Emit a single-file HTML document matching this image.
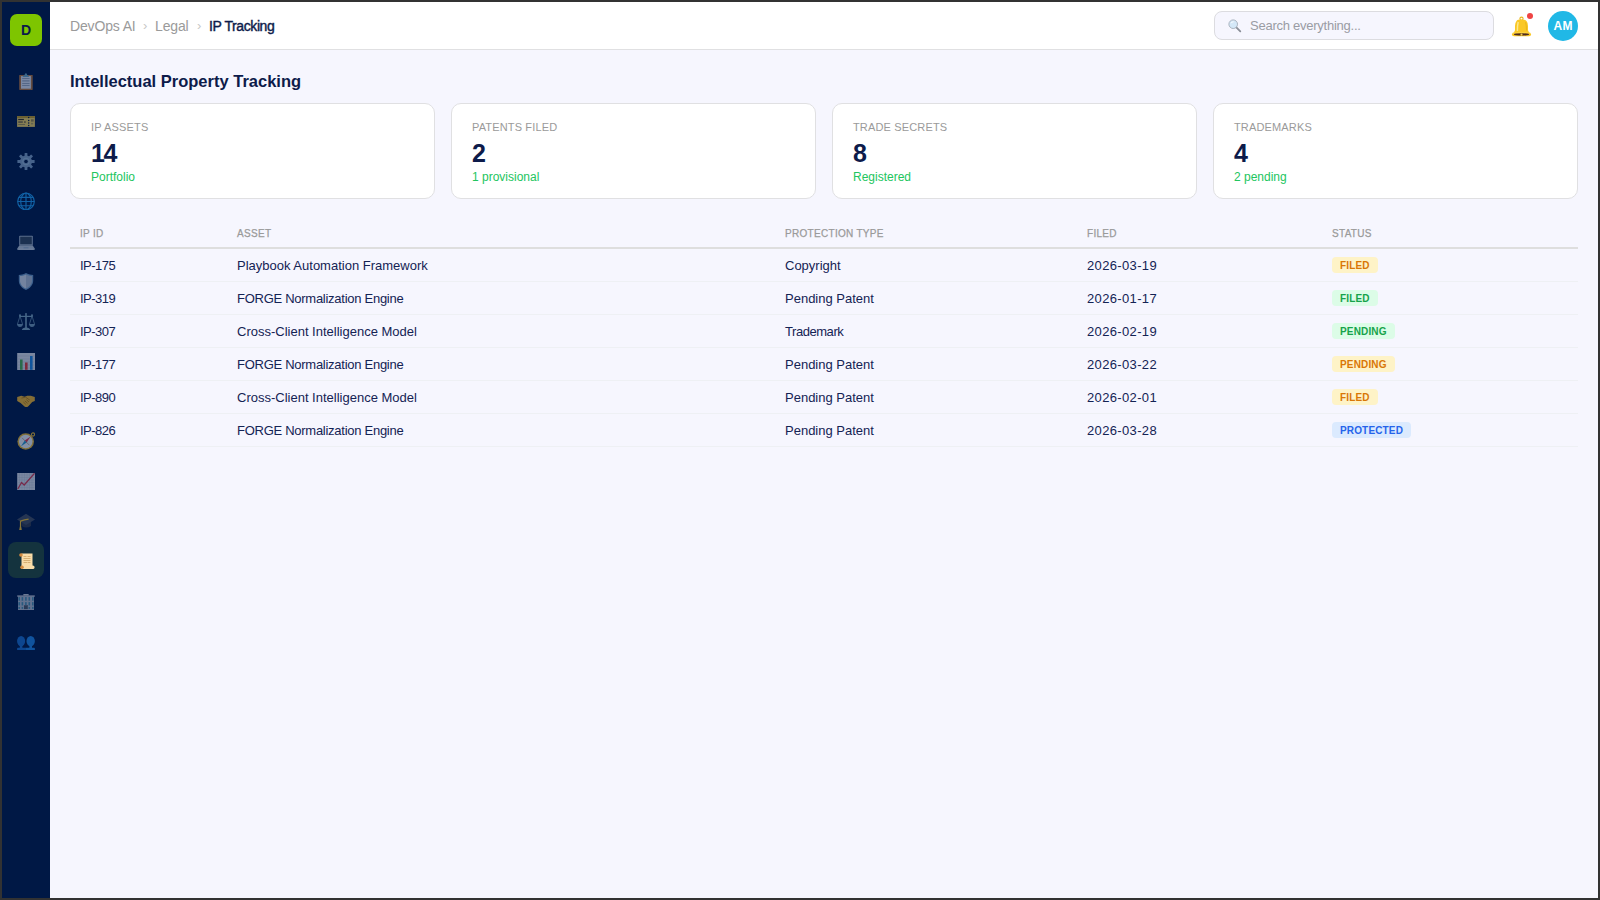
<!DOCTYPE html>
<html><head><meta charset="utf-8">
<style>
*{box-sizing:border-box;margin:0;padding:0}
html,body{width:1600px;height:900px;overflow:hidden;background:#323232;font-family:"Liberation Sans",sans-serif}
#frame{position:absolute;left:2px;top:2px;width:1596px;height:896px;background:#f6f6fe;overflow:hidden}
#side{position:absolute;left:0;top:0;width:48px;height:896px;background:#001845}
#logo{position:absolute;left:8px;top:12px;width:32px;height:32px;border-radius:7px;background:#7ec500;color:#0a1a4a;font-weight:bold;font-size:14px;text-align:center;line-height:32px}
.ni{position:absolute;left:6px;width:36px;height:36px;border-radius:8px}
.ni svg{position:absolute;left:9px;top:9px;width:18px;height:18px}
.ni.act{background:#14333e}
#hdr{position:absolute;left:48px;top:0;width:1548px;height:48px;background:#fff;border-bottom:1px solid #e0e0e2}
.bc{position:absolute;top:16px;font-size:14px;color:#9a9a9a;white-space:nowrap;letter-spacing:-0.15px}
.bc.cur{color:#0d1b4a;font-size:14px;letter-spacing:-0.4px;top:16px;-webkit-text-stroke:0.4px #0d1b4a}
.bsep{position:absolute;top:16px;font-size:13px;color:#c8c8c8}
#search{position:absolute;left:1164px;top:9px;width:280px;height:29px;border:1px solid #dcdce0;border-radius:8px;background:#f6f6fe}
#search span{position:absolute;left:35px;top:6px;font-size:13px;color:#9a9ca4;letter-spacing:-0.25px}
#avatar{position:absolute;left:1498px;top:9px;width:30px;height:30px;border-radius:50%;background:#20b8e6;color:#fff;font-size:12px;font-weight:bold;text-align:center;line-height:30px;letter-spacing:0.5px;text-indent:0.5px}
h1{position:absolute;left:68px;top:69.5px;font-size:16.5px;font-weight:bold;color:#0d1b4a;white-space:nowrap}
.card{position:absolute;top:101px;width:365px;height:96px;background:#fff;border:1px solid #e0e0e2;border-radius:10px}
.card .lb{position:absolute;left:20px;top:17px;font-size:11px;color:#9a9a9a;letter-spacing:0.15px;white-space:nowrap}
.card .v{position:absolute;left:20px;top:34.5px;font-size:25px;letter-spacing:-1.5px;font-weight:bold;color:#0d1b4a}
.card .s{position:absolute;left:20px;top:65.5px;font-size:12px;color:#22c55e;letter-spacing:0px;white-space:nowrap}
#tbl{position:absolute;left:68px;top:219px;width:1508px}
.th{position:absolute;top:0;width:1508px;height:28px;border-bottom:2px solid #dedede}
.th span{position:absolute;top:7px;font-size:10px;color:#9a9a9a;letter-spacing:0.3px;-webkit-text-stroke:0.25px #9a9a9a;white-space:nowrap}
.tr{position:absolute;left:0;width:1508px;height:33px;border-bottom:1px solid #eef0f4}
.tr span{position:absolute;top:9px;font-size:13px;color:#142354;white-space:nowrap}
.tr span.b{top:8px;height:16px;line-height:17px;padding:0 8px;border-radius:4px;font-size:10px;font-weight:bold;letter-spacing:0.15px}
.tr span.id{letter-spacing:-0.5px}
.tr span.dt{letter-spacing:0.35px}
.tr span.fg{letter-spacing:-0.27px}
.y{background:#fef3c7;color:#d97706!important}
.g{background:#dcfce7;color:#16a34a!important}
.bl{background:#dbeafe;color:#2563eb!important}
</style></head><body><div id="frame">
<div id="side">
<div id="logo">D</div>
<div class="ni act" style="top:540px"></div>
<svg style="position:absolute;left:15px;top:70px;opacity:0.55" width="18" height="18" viewBox="0 -0.5 18 18"><rect x="2.2" y="2.4" width="13.5" height="15" rx="0.6" fill="#b7743a"/><rect x="4" y="3.6" width="9.9" height="12.6" fill="#dde5f2"/><path d="M5.2 6h7.4M5.2 8.4h7.4M5.2 11h7.4M5.2 13h7.4" stroke="#9aa8be" stroke-width="1.1"/><path d="M5.5 4.4 Q6 3 7.6 2.6 L8 1.2 Q8.9 0.1 9.8 1.2 L10.2 2.6 Q11.8 3 12.2 4.4Z" fill="#6aa6c4"/></svg>
<svg style="position:absolute;left:15px;top:110px;opacity:0.55" width="18" height="18" viewBox="0 -0.5 18 18"><rect x="0.1" y="3.6" width="17.8" height="10.8" fill="#f0d060"/><rect x="0.1" y="3.6" width="17.8" height="1.9" fill="#c49a20"/><rect x="1.2" y="6.4" width="5.7" height="1.2" fill="#3a3020"/><rect x="1.2" y="8.8" width="4.6" height="1.5" fill="#7a6a40"/><rect x="7" y="8.8" width="1.8" height="1.5" fill="#7a6a40"/><rect x="1.2" y="11.5" width="6.8" height="0.9" fill="#9a8a50"/><rect x="14" y="6.8" width="2.7" height="2.3" fill="#9a8548"/><rect x="14" y="10.4" width="2.2" height="1.5" fill="#b0a060"/><g fill="#001845"><circle cx="11.7" cy="5" r="0.75"/><circle cx="11.7" cy="8" r="0.75"/><circle cx="11.7" cy="10.4" r="0.75"/><circle cx="11.7" cy="13" r="0.75"/></g></svg>
<svg style="position:absolute;left:15px;top:150px;opacity:0.55" width="18" height="18" viewBox="0 -0.5 18 18"><rect x="7.6" y="0.4" width="2.8" height="5" rx="0.5" fill="#80a0c4" transform="rotate(0 9 9)"/><rect x="7.6" y="0.4" width="2.8" height="5" rx="0.5" fill="#80a0c4" transform="rotate(45 9 9)"/><rect x="7.6" y="0.4" width="2.8" height="5" rx="0.5" fill="#80a0c4" transform="rotate(90 9 9)"/><rect x="7.6" y="0.4" width="2.8" height="5" rx="0.5" fill="#80a0c4" transform="rotate(135 9 9)"/><rect x="7.6" y="0.4" width="2.8" height="5" rx="0.5" fill="#80a0c4" transform="rotate(180 9 9)"/><rect x="7.6" y="0.4" width="2.8" height="5" rx="0.5" fill="#80a0c4" transform="rotate(225 9 9)"/><rect x="7.6" y="0.4" width="2.8" height="5" rx="0.5" fill="#80a0c4" transform="rotate(270 9 9)"/><rect x="7.6" y="0.4" width="2.8" height="5" rx="0.5" fill="#80a0c4" transform="rotate(315 9 9)"/><circle cx="9" cy="9" r="6" fill="#80a0c4"/><circle cx="9" cy="9" r="3.3" fill="none" stroke="#9cbcd8" stroke-width="1"/><circle cx="9" cy="9" r="1.8" fill="#001845"/></svg>
<svg style="position:absolute;left:15px;top:190px;opacity:0.55" width="18" height="18" viewBox="0 -0.5 18 18"><g fill="none" stroke="#1f9ef5" stroke-width="1.15"><circle cx="9" cy="9" r="8.3"/><ellipse cx="9" cy="9" rx="5.3" ry="8.3"/><path d="M9 0.7v16.6M1.6 4.8h14.8M0.7 9h16.6M1.6 13.2h14.8"/></g></svg>
<svg style="position:absolute;left:15px;top:230px;opacity:0.55" width="18" height="18" viewBox="0 -0.5 18 18"><rect x="2.2" y="3.2" width="13.6" height="9.6" rx="0.8" fill="#a9b9cc"/><rect x="3.2" y="4.2" width="11.6" height="7.6" fill="#34465c"/><path d="M2.4 12.8 H15.6 L18 16.6 Q18 17.4 17 17.4 H1 Q0 17.4 0 16.6Z" fill="#b9c6d6"/><path d="M2 16.6 H16" stroke="#dde6f0" stroke-width="0.6"/><rect x="6.5" y="14.8" width="5" height="1" fill="#8fa8c8"/></svg>
<svg style="position:absolute;left:15px;top:270px;opacity:0.55" width="18" height="18" viewBox="0 -0.5 18 18"><path d="M9 0.5 C6 2 4 2.2 1.8 2.5 V8 C1.8 12.5 5 15.8 9 17.5 C13 15.8 16.2 12.5 16.2 8 V2.5 C14 2.2 12 2 9 0.5Z" fill="#6f9cc8"/><path d="M9 1.9 C6.6 3.1 4.8 3.4 3 3.6 V8 C3 11.8 5.6 14.6 9 16.1Z" fill="#d2dcea"/><path d="M9 1.9 C11.4 3.1 13.2 3.4 15 3.6 V8 C15 11.8 12.4 14.6 9 16.1Z" fill="#aebdd2"/></svg>
<svg style="position:absolute;left:15px;top:310px;opacity:0.55" width="18" height="18" viewBox="0 -0.5 18 18"><g fill="#7fa6c0"><rect x="8.2" y="0.6" width="1.6" height="15"/><path d="M4.8 17.6 Q5.2 15.2 9 15 Q12.8 15.2 13.2 17.6Z"/><rect x="2.4" y="3.3" width="13.2" height="1.2"/><circle cx="3" cy="2.8" r="1"/><circle cx="15" cy="2.8" r="1"/><path d="M0 11.6 H6 Q5.6 14.6 3 14.6 Q0.4 14.6 0 11.6Z M12 11.6 H18 Q17.6 14.6 15 14.6 Q12.4 14.6 12 11.6Z" fill-opacity="0.9"/></g><g stroke="#7fa6c0" stroke-width="0.7" fill="none"><path d="M3 3.5 L0.4 11.8 M3 3.5 L5.6 11.8 M15 3.5 L12.4 11.8 M15 3.5 L17.6 11.8"/></g></svg>
<svg style="position:absolute;left:15px;top:350px;opacity:0.55" width="18" height="18" viewBox="0 -0.5 18 18"><rect x="0.2" y="0.5" width="18" height="17" fill="#dfe3ec"/><path d="M0.5 3.5h17M0.5 6.5h17M0.5 9.5h17M0.5 12.5h17M0.5 15.5h17" stroke="#b8bfcc" stroke-width="0.5"/><rect x="3" y="7" width="2.6" height="10.3" fill="#4caf50"/><rect x="8" y="10" width="2.6" height="7.3" fill="#e53935"/><rect x="13" y="3.5" width="2.6" height="13.8" fill="#1e88e5"/></svg>
<svg style="position:absolute;left:15px;top:390px;opacity:0.55" width="18" height="18" viewBox="0 -0.5 18 18"><path d="M0.2 4.6 L4.2 3.2 L7.8 4.2 L10.2 3.3 L13.8 3.2 L17.8 4.6 L17.8 8.4 L15.2 9.6 L11.6 13.4 Q9.6 15.3 7.8 14.2 L3.6 10.6 L0.2 8.6Z" fill="#f2b52a"/><path d="M4.5 5.6 L8.5 4.6 L12.8 7.6 M6.4 9.6 L8.8 11.8 M7.8 8.4 L10.6 10.8 M9.4 7.2 L12 9.5" stroke="#b97a0c" stroke-width="0.9" fill="none"/></svg>
<svg style="position:absolute;left:15px;top:430px;opacity:0.55" width="18" height="18" viewBox="0 -0.5 18 18"><circle cx="16" cy="2" r="1.6" fill="none" stroke="#e8b730" stroke-width="1.1"/><circle cx="8.7" cy="9" r="8.3" fill="#e8b730"/><circle cx="8.7" cy="9" r="6.8" fill="#eef2f8"/><path d="M5 5.3 L12.4 12.7" stroke="#a89078" stroke-width="0.7"/><path d="M13.6 4.1 L9.6 9.9 L7.8 8.1Z" fill="#e53950"/><path d="M3.8 13.9 L7.8 8.1 L9.6 9.9Z" fill="#2a9ad0"/></svg>
<svg style="position:absolute;left:15px;top:470px;opacity:0.55" width="18" height="18" viewBox="0 -0.5 18 18"><rect x="0.2" y="0.5" width="18" height="17" fill="#dfe3ec"/><path d="M0.5 2.5h17M0.5 5h17M0.5 7.5h17M0.5 10h17M0.5 12.5h17M0.5 15h17M2.5 0.5v17M5 0.5v17M7.5 0.5v17M10 0.5v17M12.5 0.5v17M15 0.5v17" stroke="#b8c4d4" stroke-width="0.4"/><path d="M0.8 16.5 L4.5 10 L7.2 12.5 L17.6 0.8" fill="none" stroke="#d83a50" stroke-width="1.3"/></svg>
<svg style="position:absolute;left:15px;top:510px;opacity:0.55" width="18" height="18" viewBox="0 -0.5 18 18"><path d="M4.7 9 V13.5 Q9.3 16.5 14 13.5 V9Z" fill="#323a4c"/><path d="M9 1.3 L18 7 L9 12.6 L0 7Z" fill="#444d60"/><path d="M11.6 6.6 Q7.5 7.2 3.5 8.6 V13.6" stroke="#f0c030" stroke-width="1.2" fill="none"/><path d="M2.2 17.6 L3 13.2 H4 L4.8 17.6Z" fill="#f0c030"/></svg>
<svg style="position:absolute;left:15px;top:550px;opacity:1" width="18" height="18" viewBox="0 0 18 18"><rect x="4.5" y="1.5" width="11" height="14" fill="#f8dca8"/><circle cx="4" cy="3" r="1.8" fill="#d28b40"/><rect x="4" y="13.5" width="13.5" height="3.6" rx="1.6" fill="#f8dca8"/><circle cx="5" cy="15.3" r="1.8" fill="#d28b40"/><path d="M6.5 4.5h3M10.5 4.5h3M6.5 6.5h7M6.5 8.5h7M6.5 10.5h4M11 10.5h2.5" stroke="#c0904e" stroke-width="0.6"/></svg>
<svg style="position:absolute;left:15px;top:590px;opacity:0.55" width="18" height="18" viewBox="0 -0.5 18 18"><rect x="1" y="3.8" width="16" height="13.8" fill="#b4bccc"/><rect x="0.2" y="2.9" width="17.6" height="1.3" fill="#c4cad6"/><rect x="6.3" y="1.4" width="5.4" height="1.7" rx="0.4" fill="#c4cad6"/><rect x="1.4" y="4.6" width="1.6" height="3.6" fill="#4a8fb0"/><rect x="1.4" y="9.6" width="1.6" height="3.4" fill="#4a8fb0"/><rect x="1.4" y="14.4" width="1.6" height="2.0" fill="#4a8fb0"/><rect x="4.6" y="4.6" width="1.6" height="3.6" fill="#4a8fb0"/><rect x="4.6" y="9.6" width="1.6" height="3.4" fill="#4a8fb0"/><rect x="4.6" y="14.4" width="1.6" height="2.0" fill="#4a8fb0"/><rect x="8.1" y="4.6" width="1.6" height="3.6" fill="#4a8fb0"/><rect x="8.1" y="9.6" width="1.6" height="3.4" fill="#4a8fb0"/><rect x="11.5" y="4.6" width="1.6" height="3.6" fill="#4a8fb0"/><rect x="11.5" y="9.6" width="1.6" height="3.4" fill="#4a8fb0"/><rect x="11.5" y="14.4" width="1.6" height="2.0" fill="#4a8fb0"/><rect x="15.0" y="4.6" width="1.6" height="3.6" fill="#4a8fb0"/><rect x="15.0" y="9.6" width="1.6" height="3.4" fill="#4a8fb0"/><rect x="15.0" y="14.4" width="1.6" height="2.0" fill="#4a8fb0"/><rect x="7" y="12.6" width="3.8" height="4" fill="#4d5666"/><rect x="7" y="12.6" width="3.8" height="0.8" fill="#6a7384"/></svg>
<svg style="position:absolute;left:15px;top:630px;opacity:0.55" width="18" height="18" viewBox="0 -0.5 18 18"><ellipse cx="4.1" cy="8.6" rx="4.05" ry="5.2" fill="#186ccc"/><ellipse cx="13.7" cy="8.6" rx="4.2" ry="5.2" fill="#1e84e6"/><rect x="2.8" y="12.5" width="2.6" height="3" fill="#186ccc"/><rect x="12.4" y="12.5" width="2.6" height="3" fill="#1e84e6"/><path d="M0.1 17.7 V16 Q0.1 15.2 1 15.2 H9 V17.7Z" fill="#186ccc"/><path d="M9 17.7 V15.2 H17 Q17.9 15.2 17.9 16 V17.7Z" fill="#1e84e6"/></svg>
</div>
<div id="hdr">
<span class="bc" style="left:20px">DevOps AI</span>
<span class="bsep" style="left:93px">›</span>
<span class="bc" style="left:105px">Legal</span>
<span class="bsep" style="left:147px">›</span>
<span class="bc cur" style="left:159px">IP Tracking</span>
<div id="search"><svg style="position:absolute;left:13px;top:7px" width="14" height="14" viewBox="0 0 14 14"><path d="M7.6 7.6 L12.3 12.3" stroke="#8a8f98" stroke-width="1.8" stroke-linecap="round"/><circle cx="5.2" cy="5.2" r="4.3" fill="#d4e8f8" stroke="#a9b3bf" stroke-width="1"/><path d="M3 4.2 Q4 2.6 5.6 2.8" stroke="#ffffff" stroke-width="0.9" fill="none"/></svg><span>Search everything...</span></div><svg style="position:absolute;left:1460px;top:14px" width="23" height="23" viewBox="0 0 23 23"><circle cx="11.5" cy="2.7" r="1.6" fill="none" stroke="#e8b416" stroke-width="1.1"/><path d="M6.5 4.9 Q7.2 3.6 11.5 3.6 Q15.8 3.6 16.5 4.9 Q18 6.6 18 10 V14.2 Q18.4 16.4 21 17.8 Q21.6 20.2 19 20.3 H4 Q1.4 20.2 2 17.8 Q4.6 16.4 5 14.2 V10 Q5 6.6 6.5 4.9Z" fill="#fac826"/><path d="M8.2 6 Q7.4 9 7.4 15" stroke="#fde98e" stroke-width="1.4" fill="none"/><path d="M15.6 6.2 Q16.4 9 16.5 14.5" stroke="#eab516" stroke-width="1" fill="none"/><path d="M2.6 17.2 Q11.5 15.6 20.4 17.2" stroke="#ffd84a" stroke-width="0.8" fill="none"/><ellipse cx="11.5" cy="18.4" rx="7.6" ry="1.15" fill="#4e2c22"/><circle cx="11.5" cy="18.6" r="1.05" fill="#f5d050"/></svg><div style="position:absolute;left:1477px;top:11px;width:6px;height:6px;border-radius:50%;background:#ef4444"></div>
<div id="avatar">AM</div>
</div>
<h1>Intellectual Property Tracking</h1>
<div class="card" style="left:68px"><div class="lb">IP ASSETS</div><div class="v">14</div><div class="s">Portfolio</div></div>
<div class="card" style="left:449px"><div class="lb">PATENTS FILED</div><div class="v">2</div><div class="s">1 provisional</div></div>
<div class="card" style="left:830px"><div class="lb">TRADE SECRETS</div><div class="v">8</div><div class="s">Registered</div></div>
<div class="card" style="left:1211px"><div class="lb">TRADEMARKS</div><div class="v">4</div><div class="s">2 pending</div></div>
<div id="tbl">
<div class="th"><span style="left:10px">IP ID</span><span style="left:167px">ASSET</span><span style="left:715px">PROTECTION TYPE</span><span style="left:1017px">FILED</span><span style="left:1262px">STATUS</span></div>
<div class="tr" style="top:28px"><span class="id" style="left:10px">IP-175</span><span style="left:167px">Playbook Automation Framework</span><span style="left:715px">Copyright</span><span class="dt" style="left:1017px">2026-03-19</span><span class="b y" style="left:1262px">FILED</span></div>
<div class="tr" style="top:61px"><span class="id" style="left:10px">IP-319</span><span class="fg" style="left:167px">FORGE Normalization Engine</span><span style="left:715px">Pending Patent</span><span class="dt" style="left:1017px">2026-01-17</span><span class="b g" style="left:1262px">FILED</span></div>
<div class="tr" style="top:94px"><span class="id" style="left:10px">IP-307</span><span style="left:167px">Cross-Client Intelligence Model</span><span style="left:715px;letter-spacing:-0.45px">Trademark</span><span class="dt" style="left:1017px">2026-02-19</span><span class="b g" style="left:1262px">PENDING</span></div>
<div class="tr" style="top:127px"><span class="id" style="left:10px">IP-177</span><span class="fg" style="left:167px">FORGE Normalization Engine</span><span style="left:715px">Pending Patent</span><span class="dt" style="left:1017px">2026-03-22</span><span class="b y" style="left:1262px">PENDING</span></div>
<div class="tr" style="top:160px"><span class="id" style="left:10px">IP-890</span><span style="left:167px">Cross-Client Intelligence Model</span><span style="left:715px">Pending Patent</span><span class="dt" style="left:1017px">2026-02-01</span><span class="b y" style="left:1262px">FILED</span></div>
<div class="tr" style="top:193px"><span class="id" style="left:10px">IP-826</span><span class="fg" style="left:167px">FORGE Normalization Engine</span><span style="left:715px">Pending Patent</span><span class="dt" style="left:1017px">2026-03-28</span><span class="b bl" style="left:1262px">PROTECTED</span></div>
</div>
</div></body></html>
